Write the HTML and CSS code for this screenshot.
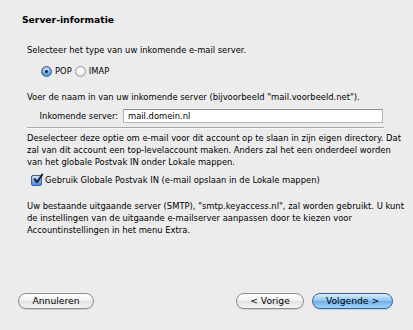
FILE: index.html
```html
<!DOCTYPE html>
<html lang="nl">
<head>
<meta charset="utf-8">
<title>Server-informatie</title>
<link rel="stylesheet" href="styles.css">
</head>
<body>
<div class="dialog">
  <h1 class="title">Server-informatie</h1>
  <div class="content">
    <p class="text prompt">Selecteer het type van uw inkomende e-mail server.</p>
    <div class="radios">
      <label class="radio"><span class="radio-dot on"></span>POP</label>
      <label class="radio"><span class="radio-dot"></span>IMAP</label>
    </div>
    <p class="text voer">Voer de naam in van uw inkomende server (bijvoorbeeld "mail.voorbeeld.net").</p>
    <div class="field">
      <span class="field-label">Inkomende server:</span>
      <span class="input">mail.domein.nl</span>
    </div>
    <div class="sep"></div>
    <p class="text para">Deselecteer deze optie om e-mail voor dit account op te slaan in zijn eigen directory. Dat<br>zal van dit account een top-levelaccount maken. Anders zal het een onderdeel worden<br>van het globale Postvak IN onder Lokale mappen.</p>
    <label class="check"><span class="box"><svg viewBox="0 0 12 12" width="12" height="12"><path d="M2.6 6.2 L5 9.2 L10.2 1.6" fill="none" stroke="#14233f" stroke-width="2" stroke-linecap="round" stroke-linejoin="round"/></svg></span>Gebruik Globale Postvak IN (e-mail opslaan in de Lokale mappen)</label>
    <p class="text para smtp">Uw bestaande uitgaande server (SMTP), "smtp.keyaccess.nl", zal worden gebruikt. U kunt<br>de instellingen van de uitgaande e-mailserver aanpassen door te kiezen voor<br>Accountinstellingen in het menu Extra.</p>
  </div>
  <div class="buttons">
    <button class="btn cancel">Annuleren</button>
    <button class="btn prev">&lt; Vorige</button>
    <button class="btn next">Volgende &gt;</button>
  </div>
</div>
</body>
</html>
```
FILE: styles.css
```css
html, body {
  margin: 0;
  padding: 0;
  background: #ececec;
}
.dialog {
  width: 413px;
  height: 330px;
  box-sizing: border-box;
  display: flex;
  flex-direction: column;
  padding-top: 14px;
  font-family: "DejaVu Sans", sans-serif;
  font-size: 8.4px;
  color: #000;
}
.title {
  margin: 0 0 0 22px;
  font-size: 9.2px;
  font-weight: bold;
  line-height: 12px;
  color: #000;
}
.content {
  padding-left: 27px;
}
.text {
  margin: 0;
  line-height: 12px;
  white-space: nowrap;
}
.prompt { margin-top: 18px; }
.radios {
  display: flex;
  align-items: center;
  gap: 3px;
  margin: 9px 0 0 14px;
  height: 12px;
}
.radio {
  display: flex;
  align-items: center;
  gap: 3px;
  line-height: 12px;
}
.radio-dot {
  width: 11px;
  height: 11px;
  border-radius: 50%;
  box-sizing: border-box;
  border: 1px solid #9a9a9a;
  background: radial-gradient(circle at 50% 35%, #ffffff 0%, #f0f0f0 50%, #d6d6d6 100%);
  position: relative;
}
.radio-dot.on {
  border-color: #3f5f8f;
  background: radial-gradient(circle at 50% 30%, #cfe6fb 0%, #6aaae6 55%, #3a7cc8 100%);
}
.radio-dot.on::after {
  content: "";
  position: absolute;
  left: 3px;
  top: 3px;
  width: 3px;
  height: 3px;
  border-radius: 50%;
  background: #0f1e38;
}
.voer { margin-top: 14px; }
.field {
  display: flex;
  align-items: center;
  margin-top: 6px;
  height: 14px;
}
.field-label {
  width: 96px;
  text-align: right;
  padding-right: 5px;
  box-sizing: border-box;
}
.input {
  width: 260px;
  height: 14px;
  box-sizing: border-box;
  background: #fff;
  border: 1px solid #b5b5b5;
  border-top-color: #8c8c8c;
  padding-left: 4px;
  line-height: 12px;
}
.sep {
  margin-top: 4px;
  width: 357px;
  height: 1px;
  background: #a9a9a9;
  border-bottom: 1px solid #f8f8f8;
}
.para { margin-top: 3px; }
.check {
  display: flex;
  align-items: center;
  gap: 3px;
  margin: 6px 0 0 4px;
  line-height: 12px;
}
.box {
  width: 11px;
  height: 11px;
  box-sizing: border-box;
  border: 1px solid #40608f;
  border-radius: 2px;
  background: linear-gradient(#cfe5fa, #6fa9e3 60%, #4f8fd6);
  position: relative;
}
.box svg {
  position: absolute;
  left: 0;
  top: -3px;
}
.smtp { margin-top: 14px; }
.buttons {
  margin-top: auto;
  margin-bottom: 21px;
  display: flex;
  align-items: center;
  padding: 0 20px 0 18px;
  height: 16px;
}
.btn {
  height: 16px;
  box-sizing: border-box;
  border-radius: 8px;
  border: 1px solid #8d8d8d;
  background: linear-gradient(#ffffff, #f1f1f1 50%, #e2e2e2 51%, #f6f6f6);
  font-family: "DejaVu Sans", sans-serif;
  font-size: 9.2px;
  color: #000;
  padding: 0;
  line-height: 14px;
  box-shadow: 0 1px 1px rgba(0,0,0,0.12);
}
.cancel { width: 76px; }
.prev { width: 68px; margin-left: auto; }
.next {
  width: 81px;
  margin-left: 8px;
  border-color: #3d5f92;
  background: linear-gradient(#d8ecfd, #8ec4f2 50%, #6aaeea 51%, #a6d6fb);
}
```
